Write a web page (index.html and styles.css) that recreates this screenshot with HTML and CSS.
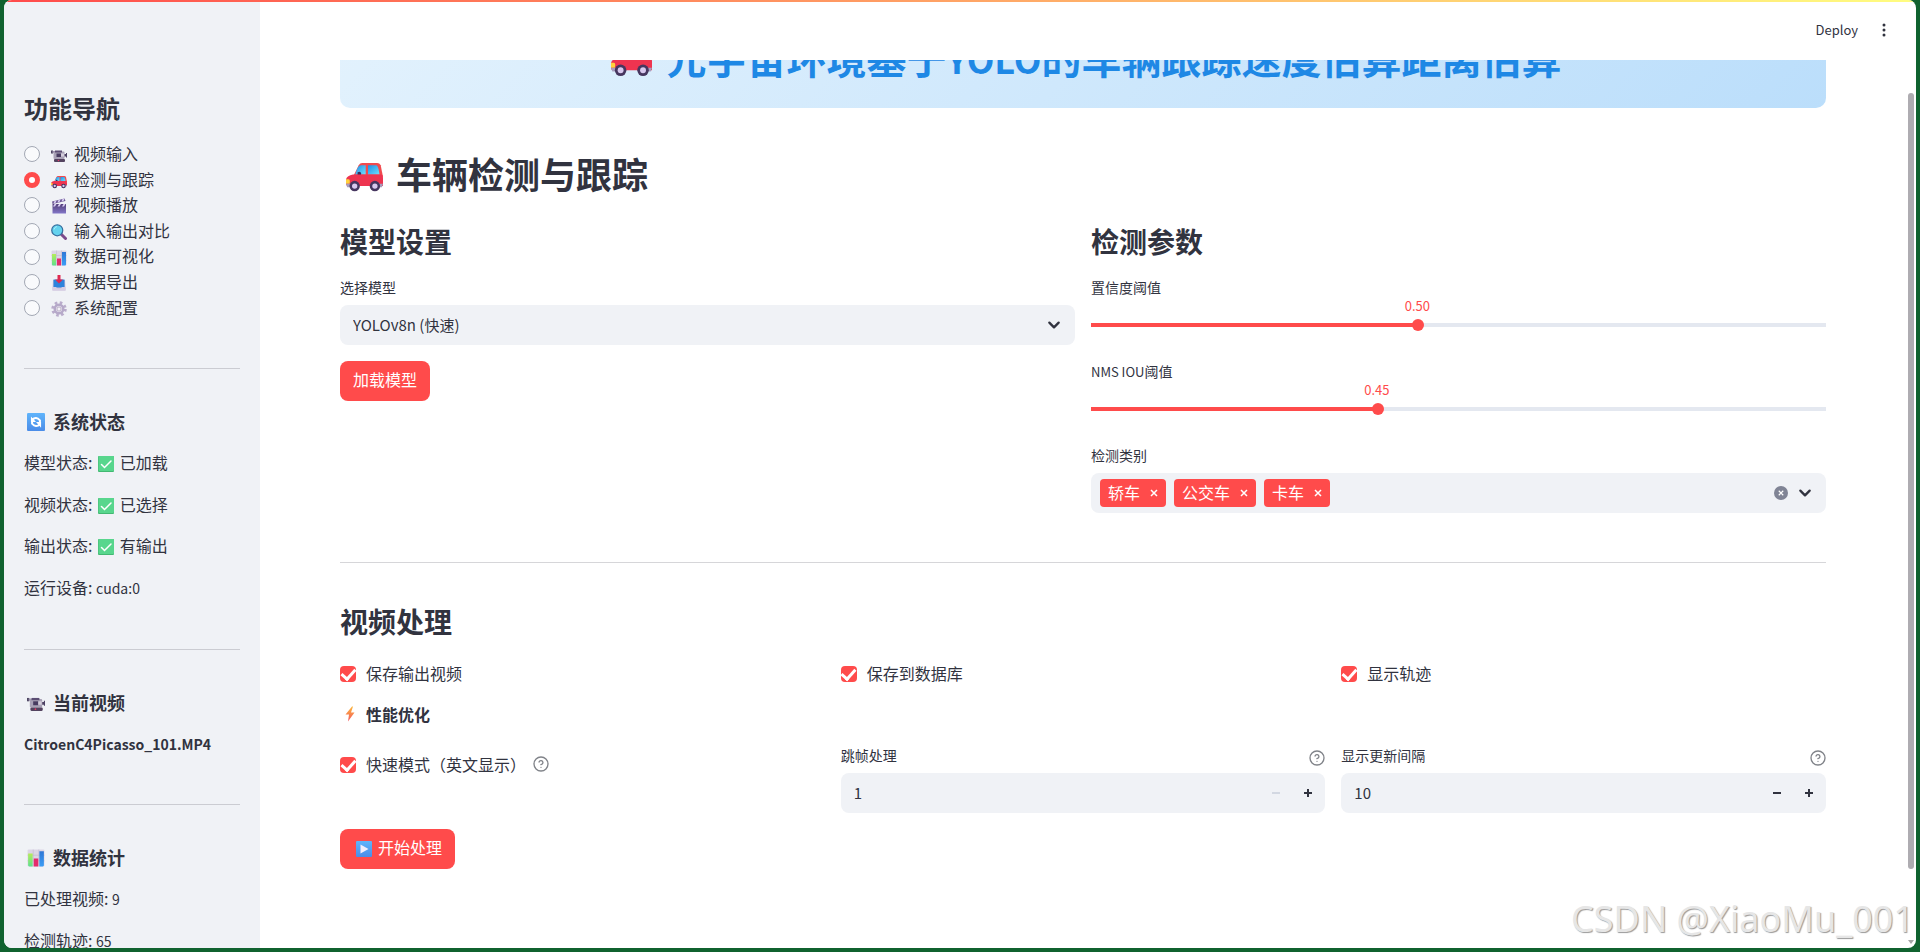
FILE: index.html
```html
<!DOCTYPE html>
<html lang="zh-CN">
<head>
<meta charset="utf-8">
<title>车辆检测与跟踪</title>
<link rel="stylesheet" href="styles.css">
</head>
<body>
<svg class="defs" aria-hidden="true">
  <defs>
    <linearGradient id="g-win" x1="0" y1="0" x2="1" y2="1"><stop offset="0" stop-color="#1b8fe8"/><stop offset="1" stop-color="#6fe0fb"/></linearGradient>
    <linearGradient id="g-green" x1="0" y1="0" x2="0" y2="1"><stop offset="0" stop-color="#b5ec5a"/><stop offset="1" stop-color="#5ee08e"/></linearGradient>
    <linearGradient id="g-blue" x1="0" y1="0" x2="0" y2="1"><stop offset="0" stop-color="#2f77d6"/><stop offset="1" stop-color="#3b9df5"/></linearGradient>
    <linearGradient id="g-tile" x1="0" y1="0" x2="0" y2="1"><stop offset="0" stop-color="#5fb4fb"/><stop offset="1" stop-color="#4a8ce8"/></linearGradient>
    <linearGradient id="g-clap" x1="0" y1="0" x2="0" y2="1"><stop offset="0" stop-color="#54407a"/><stop offset="1" stop-color="#8377c9"/></linearGradient>
    <linearGradient id="g-bolt" x1="0" y1="0" x2="0" y2="1"><stop offset="0" stop-color="#fbb73c"/><stop offset="1" stop-color="#f4565e"/></linearGradient>
    <symbol id="car" viewBox="0 0 32 32">
      <path d="M7 16 11 8q1-2 3-2h13q2 0 3 2l2 10H6z" fill="#f04a4e"/>
      <path d="M8 16q2-8 5-8h4v8z" fill="url(#g-win)"/><path d="M19 8h7q2 0 3 8H19z" fill="url(#g-win)"/>
      <path d="M10 14q3-1 3 1v3h-3z" fill="#3a2f5b"/>
      <path d="M0 20q1-3 6-4h24q2 0 2 3v7H2q-2 0-2-2z" fill="#ee3450"/>
      <path d="M0 20h2q2 0 1 4H0z" fill="#ffd23b"/><path d="M0 24h4v3H1zm28 0h4l-1 3h-3z" fill="#a79dbd"/>
      <circle cx="7.500" cy="26" r="4.500" fill="#46365f"/><circle cx="7.500" cy="26" r="2.300" fill="#d8c8ee"/>
      <circle cx="25" cy="26" r="4.500" fill="#46365f"/><circle cx="25" cy="26" r="2.300" fill="#d8c8ee"/>
    </symbol>
    <symbol id="camera" viewBox="0 0 32 32">
      <path d="M0 7h4v6H0z" fill="#4e4763"/><path d="M3 8h5v4H3z" fill="#9a90ac"/>
      <rect x="5" y="9" width="22" height="15" rx="2" fill="#a9a2b6"/><path d="M8 7h14v4H8z" fill="#5b4d73"/>
      <rect x="11" y="13" width="9" height="7" fill="#483c60"/><path d="M20 13h6v6h-6z" fill="#d4cedb"/>
      <path d="M27 14h3v-2h2v9h-2v-2h-3z" fill="#4c4163"/>
      <rect x="6" y="24" width="22" height="6" rx="2" fill="#53435f"/><circle cx="15" cy="27" r="1.500" fill="#e23a67"/>
    </symbol>
    <symbol id="clapper" viewBox="0 0 32 32">
      <path d="M3 12h27v19H3z" fill="url(#g-clap)"/><path d="M2 7 27 1l2 5-26 6z" fill="#6e5a96"/>
      <path d="m7 6 4-1-2 5-4 1zm8-2 4-1-2 5-4 1zm8-2 4-1-2 5-4 1z" fill="#d9cdf4"/>
      <path d="M7 12h4l-3 5H4zm9 0h4l-3 5h-4zm9 0h4l-3 5h-4z" fill="#d9cdf4"/>
    </symbol>
    <symbol id="search" viewBox="0 0 32 32">
      <path d="m20 20 9 9" stroke="#7b4a8c" stroke-width="6" stroke-linecap="round"/>
      <circle cx="12.500" cy="12.500" r="11" fill="#64d2ee" stroke="#386f9f" stroke-width="2.500"/><path d="M6 11q1-5 6-6" stroke="#a5effb" stroke-width="2" fill="none"/>
    </symbol>
    <symbol id="chart" viewBox="0 0 32 32">
      <rect x="1" y="1" width="30" height="30" rx="2" fill="#dcd5e5"/><path d="M1 11h30M1 21h30M11 1v30M21 1v30" stroke="#bdb4cb"/>
      <path d="M2 8h8v23H4q-2 0-2-2z" fill="url(#g-green)"/><path d="M12 17h8v14h-8z" fill="#e42b6d"/><path d="M22 4h8v25q0 2-2 2h-6z" fill="url(#g-blue)"/>
    </symbol>
    <symbol id="inbox" viewBox="0 0 32 32">
      <path d="M4 10h24l1 18v3H3v-3z" fill="#c8bdd9"/><path d="M5 9h22v16H5z" fill="#2d83dc"/><path d="M3 24h7q1 3 6 3t6-3h7v7H3z" fill="#d7cee4"/>
      <path d="M13 0h6v9h5l-8 8-8-8h5z" fill="#df2850"/>
    </symbol>
    <symbol id="gear" viewBox="0 0 32 32">
      <circle cx="16" cy="16" r="12.500" fill="none" stroke="#b9accb" stroke-width="6" stroke-dasharray="5 4.817"/>
      <circle cx="16" cy="16" r="8.500" fill="#e8e3ee" stroke="#b6a9c9" stroke-width="5"/><circle cx="16" cy="16" r="4" fill="#f3f1f7" stroke="#8f819f"/>
    </symbol>
    <symbol id="refresh" viewBox="0 0 32 32">
      <rect x="0" y="0" width="32" height="32" rx="2" fill="url(#g-tile)"/>
      <g fill="none" stroke="#fff" stroke-width="3.500"><path d="M9 12q7-7 14 1v4"/><path d="M23 20q-7 7-14-1v-4"/></g>
      <path d="M7 6v10h9zM25 26V16h-9z" fill="#fff"/>
    </symbol>
    <symbol id="check" viewBox="0 0 32 32">
      <rect x="0" y="0" width="32" height="32" rx="2" fill="#42b872"/><rect x="1" y="0" width="31" height="30" rx="2" fill="#58d68d"/>
      <path d="m7 17 6 6L26 10" fill="none" stroke="#fff" stroke-width="3" stroke-linecap="round"/>
    </symbol>
    <symbol id="bolt" viewBox="0 0 32 32"><path d="M20 1 7 17h7l-2 14 13-18h-7l4-12z" fill="url(#g-bolt)"/></symbol>
    <symbol id="play" viewBox="0 0 32 32"><rect x="0" y="0" width="32" height="32" rx="2" fill="url(#g-tile)"/><path d="M9 7v18l16-9z" fill="#f2eefb"/></symbol>
    <symbol id="help" viewBox="0 0 24 24">
      <g fill="none" stroke="currentColor" stroke-width="2" stroke-linecap="round" stroke-linejoin="round"><circle cx="12" cy="12" r="10.500"/><path d="M9.090 9a3 3 0 0 1 5.830 1c0 2-3 3-3 3M12 17h.010"/></g>
    </symbol>
    <symbol id="chevron" viewBox="0 0 12 12"><path d="m2 4 4 4 4-4" fill="none" stroke="#31333f" stroke-width="2" stroke-linecap="round" stroke-linejoin="round"/></symbol>
    <symbol id="cross" viewBox="0 0 8 8"><path d="m1 1 6 6M7 1 1 7" stroke="currentColor" stroke-width="1.500"/></symbol>
  </defs>
</svg>
<div class="window">
  <aside class="sidebar">
    <h2 class="nav-title">功能导航</h2>
    <div class="nav">
      <label class="nav-item"><input type="radio" name="page"><svg class="emoji"><use href="#camera"/></svg>视频输入</label>
      <label class="nav-item"><input type="radio" name="page" checked><svg class="emoji"><use href="#car"/></svg>检测与跟踪</label>
      <label class="nav-item"><input type="radio" name="page"><svg class="emoji"><use href="#clapper"/></svg>视频播放</label>
      <label class="nav-item"><input type="radio" name="page"><svg class="emoji"><use href="#search"/></svg>输入输出对比</label>
      <label class="nav-item"><input type="radio" name="page"><svg class="emoji"><use href="#chart"/></svg>数据可视化</label>
      <label class="nav-item"><input type="radio" name="page"><svg class="emoji"><use href="#inbox"/></svg>数据导出</label>
      <label class="nav-item"><input type="radio" name="page"><svg class="emoji"><use href="#gear"/></svg>系统配置</label>
    </div>
    <section class="side-section">
      <h3><svg class="emoji"><use href="#refresh"/></svg>系统状态</h3>
      <p>模型状态: <svg class="emoji"><use href="#check"/></svg> 已加载</p>
      <p>视频状态: <svg class="emoji"><use href="#check"/></svg> 已选择</p>
      <p>输出状态: <svg class="emoji"><use href="#check"/></svg> 有输出</p>
      <p>运行设备: <span class="latin">cuda:0</span></p>
    </section>
    <section class="side-section">
      <h3><svg class="emoji"><use href="#camera"/></svg>当前视频</h3>
      <p><strong class="latin">CitroenC4Picasso_101.MP4</strong></p>
    </section>
    <section class="side-section">
      <h3><svg class="emoji"><use href="#chart"/></svg>数据统计</h3>
      <p>已处理视频: <span class="latin">9</span></p>
      <p>检测轨迹: <span class="latin">65</span></p>
    </section>
  </aside>

  <main class="main">
    <header class="topbar">
      <button class="deploy" type="button">Deploy</button>
      <button class="menu" type="button" aria-label="菜单"><svg viewBox="0 0 4 14"><circle cx="2" cy="2" r="1.500"/><circle cx="2" cy="7" r="1.500"/><circle cx="2" cy="12" r="1.500"/></svg></button>
    </header>
    <div class="content">
      <h1 class="banner"><svg class="emoji"><use href="#car"/></svg><span>元宇宙环境基于<span class="latin">YOLO</span>的车辆跟踪速度估算距离估算</span></h1>
      <h2 class="page-title"><svg class="emoji"><use href="#car"/></svg>车辆检测与跟踪</h2>

      <div class="cols two">
        <section class="stack">
          <h3 class="section-title">模型设置</h3>
          <div class="field">
            <label class="label" for="model">选择模型</label>
            <div class="select-box">
              <select id="model"><option>YOLOv8n (快速)</option></select>
              <svg class="chevron"><use href="#chevron"/></svg>
            </div>
          </div>
          <button class="primary" type="button">加载模型</button>
        </section>
        <section class="stack">
          <h3 class="section-title">检测参数</h3>
          <div class="field slider" style="--pos:44.4%">
            <label class="label" for="conf">置信度阈值</label>
            <div class="track"><output for="conf">0.50</output><input id="conf" type="range" min="0.1" max="1" step="0.05" value="0.5"></div>
          </div>
          <div class="field slider" style="--pos:38.9%">
            <label class="label" for="iou"><span class="latin">NMS IOU</span>阈值</label>
            <div class="track"><output for="iou">0.45</output><input id="iou" type="range" min="0.1" max="1" step="0.05" value="0.45"></div>
          </div>
          <div class="field">
            <label class="label" for="classes">检测类别</label>
            <div class="multi">
              <span class="tag">轿车<button type="button" aria-label="移除轿车"><svg><use href="#cross"/></svg></button></span>
              <span class="tag">公交车<button type="button" aria-label="移除公交车"><svg><use href="#cross"/></svg></button></span>
              <span class="tag">卡车<button type="button" aria-label="移除卡车"><svg><use href="#cross"/></svg></button></span>
              <input id="classes" type="text">
              <button class="clear" type="button" aria-label="清除"><svg><use href="#cross"/></svg></button>
              <svg class="chevron"><use href="#chevron"/></svg>
            </div>
          </div>
        </section>
      </div>

      <hr class="rule">

      <section class="stack">
        <h3 class="section-title">视频处理</h3>
        <div class="cols three options">
          <label class="tick"><input type="checkbox" checked>保存输出视频</label>
          <label class="tick"><input type="checkbox" checked>保存到数据库</label>
          <label class="tick"><input type="checkbox" checked>显示轨迹</label>
        </div>
        <p class="sub"><svg class="emoji"><use href="#bolt"/></svg>性能优化</p>
        <div class="cols three">
          <div class="tick-row">
            <label class="tick"><input type="checkbox" checked>快速模式（英文显示）</label>
            <svg class="help"><use href="#help"/></svg>
          </div>
          <div class="field">
            <div class="label-row"><label class="label" for="skip">跳帧处理</label><svg class="help"><use href="#help"/></svg></div>
            <div class="number">
              <input id="skip" type="text" inputmode="numeric" value="1">
              <button type="button" class="step off" aria-label="减少" disabled></button>
              <button type="button" class="step plus" aria-label="增加"></button>
            </div>
          </div>
          <div class="field">
            <div class="label-row"><label class="label" for="interval">显示更新间隔</label><svg class="help"><use href="#help"/></svg></div>
            <div class="number">
              <input id="interval" type="text" inputmode="numeric" value="10">
              <button type="button" class="step" aria-label="减少"></button>
              <button type="button" class="step plus" aria-label="增加"></button>
            </div>
          </div>
        </div>
        <button class="primary" type="button"><svg class="emoji"><use href="#play"/></svg>开始处理</button>
      </section>
    </div>
  </main>
  <div class="scrollbar"></div>
  <div class="scroll-arrow"></div>
  <div class="watermark">CSDN @XiaoMu_001</div>
</div>
</body>
</html>
```

FILE: styles.css
```css
* { box-sizing: border-box; }

body {
  margin: 0;
  height: 100vh;
  padding: 0 4px 4px;
  overflow: hidden;
  background: #10622f;
  color: #31333f;
  font: 16px/1.6 "Noto Sans CJK SC", "Noto Sans", sans-serif;
}

h1, h2, h3, p { margin: 0; }
button, input, select { font: inherit; color: inherit; }
button { border: 0; padding: 0; background: none; }
.defs { position: absolute; width: 0; height: 0; }
.emoji { width: 16px; height: 16px; flex: none; }
.latin { font-size: 14px; line-height: 1; }

.window {
  position: relative;
  display: flex;
  height: 100%;
  overflow: hidden;
  border-radius: 8px;
  background: #fff;
}
.window::before {
  content: "";
  position: absolute;
  inset: 0 0 auto;
  height: 2px;
  z-index: 2;
  background: linear-gradient(90deg, #ff4b4b, #fffd80);
}

.sidebar {
  flex: none;
  width: 256px;
  padding: 90px 20px 0;
  background: #f0f2f6;
  overflow: hidden;
}
.nav-title { font-size: 24px; line-height: 36px; margin-bottom: 15px; }
.nav-item { display: flex; align-items: center; }
.nav-item .emoji { margin: 3px 7px 0 11px; }
.nav-item input {
  appearance: none;
  width: 16px;
  height: 16px;
  margin: 1px 0 0;
  border: 1px solid #a3a8b4;
  border-radius: 50%;
  background: #f9fafc;
}
.nav-item input:checked { border: 5px solid #ff4b4b; background: #fff; }

.side-section { border-top: 1px solid #cbccd2; margin-top: 48px; padding-top: 37px; }
.side-section h3 { display: flex; align-items: center; font-size: 18px; line-height: 30px; margin-bottom: 14px; }
.side-section h3 .emoji { width: 18px; height: 18px; margin: 2px 8px 0 3px; }
.side-section p + p { margin-top: 16px; }
.side-section p .emoji { vertical-align: -3px; margin: 0 2px; }

.main { flex: 1; min-width: 0; padding-right: 10px; }
.topbar {
  position: relative;
  z-index: 1;
  display: flex;
  justify-content: flex-end;
  align-items: center;
  gap: 24px;
  height: 60px;
  padding-right: 20px;
  background: #fff;
}
.deploy { font-size: 13px; }
.menu { display: flex; }
.menu svg { width: 4px; height: 14px; fill: #31333f; }

.content { padding: 0 80px; }
.banner {
  display: flex;
  justify-content: center;
  align-items: center;
  height: 100px;
  margin: -52px 0 32px;
  padding-bottom: 2px;
  border-radius: 10px;
  background: linear-gradient(135deg, #e3f2fd, #bbdefb);
  color: #1e88e5;
  font-size: 40px;
  line-height: 60px;
}
.banner .emoji { width: 41px; height: 41px; margin: 0 14px 0 7px; }
.banner .latin { font-size: 36px; }
.page-title { display: flex; align-items: center; font-size: 36px; line-height: 44px; padding: 11px 0 13px; margin-bottom: 10px; }
.page-title .emoji { width: 37px; height: 37px; margin: 3px 13px 0 6px; }

.cols { display: grid; gap: 16px; }
.two { grid-template-columns: repeat(2, minmax(0, 1fr)); }
.three { grid-template-columns: repeat(3, minmax(0, 1fr)); }
.stack { display: flex; flex-direction: column; align-items: stretch; gap: 16px; }
.stack > .primary { align-self: flex-start; }
.section-title { font-size: 28px; line-height: 34px; padding: 6px 0 1px; }

.field { display: flex; flex-direction: column; }
.label { font-size: 14px; line-height: 24px; margin-bottom: 6px; }
.label .latin, .track output { font-size: 13px; }
.select-box, .multi, .number {
  display: flex;
  align-items: center;
  height: 40px;
  border-radius: 8px;
  background: #f0f2f6;
}
.select-box { position: relative; }
select {
  appearance: none;
  flex: 1;
  height: 40px;
  padding: 0 13px;
  border: 0;
  background: none;
  font-size: 15px;
}
.chevron { width: 14px; height: 14px; flex: none; }
.select-box .chevron { position: absolute; right: 14px; pointer-events: none; }

.primary {
  display: flex;
  align-items: center;
  height: 40px;
  padding: 0 13px 2px;
  border-radius: 8px;
  background: #ff4b4b;
  color: #fff;
}
.primary .emoji { margin: 2px 6px 0 3px; }

.slider { height: 68px; }
.track { position: relative; height: 20px; }
.track output {
  position: absolute;
  left: var(--pos);
  bottom: 9px;
  transform: translateX(-50%);
  color: #ff4b4b;
  line-height: 20px;
}
.track input {
  appearance: none;
  display: block;
  width: 100%;
  height: 20px;
  margin: 10px 0 0;
  background: linear-gradient(90deg, #ff4b4b var(--pos), #e4e8f0 var(--pos)) center / 100% 4px no-repeat;
}
.track input::-webkit-slider-thumb { appearance: none; width: 12px; height: 12px; border-radius: 50%; background: #ff4b4b; }

.multi { gap: 8px; padding: 0 14px 0 9px; }
.tag {
  display: flex;
  align-items: center;
  gap: 10px;
  height: 28px;
  padding: 0 8px;
  border-radius: 4px;
  background: #ff4b4b;
  color: #fff;
}
.tag button { display: flex; }
.tag svg { width: 8px; height: 8px; }
.multi input { flex: 1; min-width: 0; border: 0; background: none; outline: 0; }
.clear {
  display: grid;
  place-items: center;
  width: 14px;
  height: 14px;
  margin-right: 2px;
  border-radius: 50%;
  background: #808495;
  color: #fff;
}
.clear svg { width: 6px; height: 6px; }

.rule { margin: 49px 0 35px; border: 0; border-top: 1px solid #d6d6d9; }

.options { padding-top: 6px; }
.tick { display: flex; align-items: center; gap: 10px; line-height: 24px; }
.tick input {
  appearance: none;
  width: 16px;
  height: 16px;
  margin: 2px 0 0;
  border-radius: 4px;
  background: #ff4b4b;
  display: grid;
  place-items: center;
}
.tick input::after {
  content: "";
  width: 6px;
  height: 11px;
  margin-top: -3px;
  border: solid #fff;
  border-width: 0 3px 3px 0;
  transform: rotate(42deg);
}
.tick-row { display: flex; align-items: center; align-self: start; gap: 7px; height: 38px; padding-top: 4px; }
.help { width: 16px; height: 16px; flex: none; color: #808389; }
.sub { display: flex; align-items: center; font-weight: 700; line-height: 26px; }
.sub .emoji { margin: 0 8px 0 2px; }
.label-row { display: flex; justify-content: space-between; align-items: center; height: 30px; }

.number { padding-right: 1px; }
.number input { flex: 1; min-width: 0; border: 0; padding: 0 13px; background: none; font-size: 15px; outline: 0; }
.step { display: grid; place-items: center; width: 32px; height: 40px; }
.step::before, .plus::after { content: ""; grid-area: 1 / 1; width: 8px; height: 2px; background: #31333f; }
.plus::after { width: 2px; height: 8px; }
.off::before { background: #d3d8e2; }

.scrollbar {
  position: absolute;
  right: 2px;
  top: 93px;
  bottom: 79px;
  width: 6px;
  border-radius: 3px;
  background: #aeacb1;
}
.scroll-arrow {
  position: absolute;
  right: 2px;
  bottom: 4px;
  border: 3px solid transparent;
  border-top: 4px solid #a5a5a5;
  border-bottom: 0;
}
.watermark {
  position: absolute;
  right: 2px;
  bottom: 4px;
  color: #e6e6e6;
  font: 36px/50px "Noto Sans", sans-serif;
  text-shadow: 1px 1px 1px #999;
}
```
